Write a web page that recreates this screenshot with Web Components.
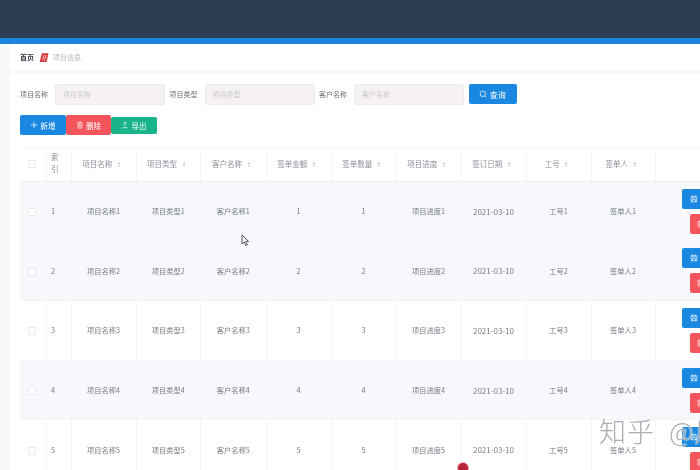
<!DOCTYPE html>
<html lang="zh"><head><meta charset="utf-8"><title>项目信息</title>
<style>
html,body{margin:0;height:470px;overflow:hidden;background:#fff}
body{font-family:"Noto Sans CJK SC","Liberation Sans",sans-serif;position:relative;filter:blur(.55px)}
</style></head><body>
<app-shell>
  <top-bar slot="top"></top-bar>
  <crumb-bar slot="crumb"><span slot="home">首页</span><span slot="here">项目信息</span></crumb-bar>
  <search-form></search-form>
  <tool-bar>
    <ui-btn color="blue" icon="plus" wide>新增</ui-btn>
    <ui-btn color="red" icon="trash" wide>删除</ui-btn>
    <ui-btn color="green" icon="export" wide low>导出</ui-btn>
  </tool-bar>
  <data-table></data-table>
</app-shell>
<screen-overlay></screen-overlay>
<script>
const ICONS={
 plus:'<path d="M5 1v8M1 5h8" fill="none" stroke="currentColor" stroke-width=".9"/>',
 trash:'<path d="M1.5 2.5h7M3.8 2.3V1.2h2.4v1.1M2.5 2.6v6.2h5V2.6M4.2 4v3.4M5.8 4v3.4" fill="none" stroke="currentColor" stroke-width=".8"/>',
 export:'<path d="M5 1.4v5M3.2 3 5 1.2 6.8 3M1.800 8.4h6.4" fill="none" stroke="currentColor" stroke-width=".9"/>',
 search:'<circle cx="4.8" cy="4.8" r="3.4" fill="none" stroke="currentColor" stroke-width=".9"/><path d="M7.2 7.2 9 9" stroke="currentColor" stroke-width=".9"/>',
 save:'<path d="M1.5 1.5h6l1 1v6h-7zM3.2 1.6v2.2h3.4V1.6M3 8.4V5.8h4v2.6" fill="none" stroke="currentColor" stroke-width=".85"/>'
};
const def=(n,html,extra)=>customElements.define(n,class extends HTMLElement{
  constructor(){super();this.attachShadow({mode:'open'}).innerHTML=html;}
  connectedCallback(){extra&&extra.call(this)}
});
def('app-shell',`<style>
:host{display:flex;flex-direction:column;width:700px;height:470px;overflow:hidden;background:#f8f9fb}
main{flex:1;margin-left:10px;background:#fff;padding:0 0 0 10px;display:flex;flex-direction:column;min-width:0;min-height:0;overflow:hidden}
.gap{flex:none;height:4px;background:#fafafa;margin-left:-10px}
.c{flex:none;margin-left:10px}
</style><slot name="top"></slot><div class="c"><slot name="crumb"></slot></div><main><div class="gap"></div><slot></slot></main>`);
def('top-bar',`<style>:host{display:block;flex:none;height:38px;background:#2c3e53;border-bottom:6px solid #1b84dd}</style>`);
def('crumb-bar',`<style>
:host{display:flex;align-items:center;height:26px;padding-left:10px;background:#fff;font-size:7px}
.h{color:#3a3f48;font-weight:700}.t{color:#b4b8bf;margin-left:4px}
svg{margin-left:5px;width:10px;height:11px}
</style><span class="h"><slot name="home"></slot></span>
<svg viewBox="0 0 9 10"><path d="M2.600 1.200h6L6.800 9.200H.6z" fill="#d8343c"/><path d="M3.600 3.400h3.400M3.200 5.200h3.400M4.200 3.400 3.200 8.400M6 3.400 5 8.400" stroke="#f6c6c8" stroke-width=".6" fill="none"/></svg>
<span class="t"><slot name="here"></slot></span>`);
def('ui-btn',`<style>
:host{display:inline-flex;align-items:center;justify-content:center;gap:2.5px;box-sizing:border-box;height:20px;padding:0 8px;border-radius:2px;color:#fff;font-size:7.5px;white-space:nowrap;background:#1a87e0;flex:none}
:host([color=red]){background:#f4555c}
:host([color=green]){background:#19b48a;height:17px}
:host([wide]){width:45.5px;padding:0}
svg{width:8px;height:8px;flex:none}
</style><svg viewBox="0 0 10 10"></svg><slot></slot>`,function(){this.shadowRoot.querySelector('svg').innerHTML=ICONS[this.getAttribute('icon')]||''});
def('search-form',`<style>
:host{display:flex;flex:none;align-items:center;height:22px;margin-top:9px;font-size:7px;color:#6b7079}
label{white-space:nowrap;width:35px;flex:none}
.i{box-sizing:border-box;flex:none;width:110px;height:21px;margin-right:4.5px;background:#f6f2f2;border:1px solid #efecec;border-radius:2px;color:#c9c9cc;font-size:7px;display:flex;align-items:center;padding-left:7px}
ui-btn{width:48px;font-size:8px}
</style>
<label>项目名称</label><div class="i">项目名称</div>
<label>项目类型</label><div class="i">项目类型</div>
<label>客户名称</label><div class="i">客户名称</div>
<ui-btn icon="search">查询</ui-btn>`);
def('tool-bar',`<style>:host{display:flex;flex:none;align-items:center;height:20px;margin-top:10px}</style><slot></slot>`);
const W=[26,25,65,64.5,65.5,65,65,65,65,65,64,114];
const H=['','索引','项目名称','项目类型','客户名称','签单金额','签单数量','项目进度','签订日期','工号','签单人',''];
const head=H.map((h,i)=>{
  if(i===0)return '<th class="n"><i class="cb"></i></th>';
  if(i===1)return '<th class="idx">索<br>引</th>';
  if(i===11)return '<th></th>';
  return `<th class="s">${h}<b class="sort"><u></u><s></s></b></th>`;
}).join('');
const rows=[1,2,3,4,5].map(n=>`<tr class="${n==3||n==5?'':'st'}"><td><i class="cb"></i></td><td class="idx">${n}</td>
<td>项目名称${n}</td><td>项目类型${n}</td><td>客户名称${n}</td><td>${n}</td><td>${n}</td><td>项目进度${n}</td><td class="dt">2021-03-10</td><td>工号${n}</td><td>签单人${n}</td>
<td class="op"><div><ui-btn icon="save" style="width:60px;justify-content:flex-start">编辑</ui-btn><ui-btn color="red" icon="trash" style="width:44px;justify-content:flex-start;padding-left:6px">删除</ui-btn></div></td></tr>`).join('');
def('data-table',`<style>
:host{display:block;flex:none;margin-top:12px;width:800px;font-size:7.3px;color:#777c85}
table{border-collapse:collapse;table-layout:fixed;width:${W.reduce((a,b)=>a+b)}px}
th,td{padding:0;text-align:center;border-right:1px solid #f4f5f7;border-bottom:1px solid #f2f3f6;font-weight:400;box-sizing:border-box}
th{height:34px;font-size:7.5px;color:#8b9098;border-top:1px solid #f6f7f8;padding-bottom:3px}
th.s{padding-right:5px}
td{height:59.6px}
.st td{background:#f7f8fb}
.idx{text-align:left;padding-left:4.5px;line-height:12px}
.dt{font-size:8px}
.cb{display:inline-block;box-sizing:border-box;width:8px;height:8px;background:#fff;border:1px solid #e8eaee;border-radius:1px;vertical-align:middle;margin-left:-1px}
.sort{display:inline-flex;flex-direction:column;gap:1px;margin-left:5.500px;vertical-align:middle}
.sort u,.sort s{display:block;width:0;height:0;border:1.7px solid transparent}
.sort u{border-top:0;border-bottom:2px solid #b5b9c0}.sort s{border-bottom:0;border-top:2px solid #b5b9c0}
.op div{display:flex;flex-direction:column;align-items:center;gap:5px;margin-left:-1px}
</style><table><colgroup>${W.map(w=>`<col style="width:${w}px">`).join('')}</colgroup>
<thead><tr>${head}</tr></thead><tbody>${rows}</tbody></table>`);
def('screen-overlay',`<style>
:host{position:absolute;inset:0;display:block;pointer-events:none;overflow:hidden}
.c{position:absolute;left:241px;top:234px;width:9px;height:13px}
.w{position:absolute;left:599px;top:414px;font:300 27px/34px "Noto Sans CJK SC",sans-serif;color:rgba(135,140,145,.7);text-shadow:0 0 1.5px #fff,0 0 1.5px #fff;white-space:nowrap;letter-spacing:1px}
.w span{margin-left:14px}
.d{position:absolute;left:458px;top:463px;width:10px;height:10px;border-radius:50%;background:#b8243a;box-shadow:0 0 0 1px #f7a9b3}
</style>
<svg class="c" viewBox="0 0 9 13"><path d="M1 1v9l2.200-2 1.600 3.600 1.600-.7L4.800 7.400H7.500z" fill="#fff" stroke="#3c4046" stroke-width=".9"/></svg>
<div class="w">知乎<span>@用户</span></div><div class="d"></div>`);
</script>
</body></html>
